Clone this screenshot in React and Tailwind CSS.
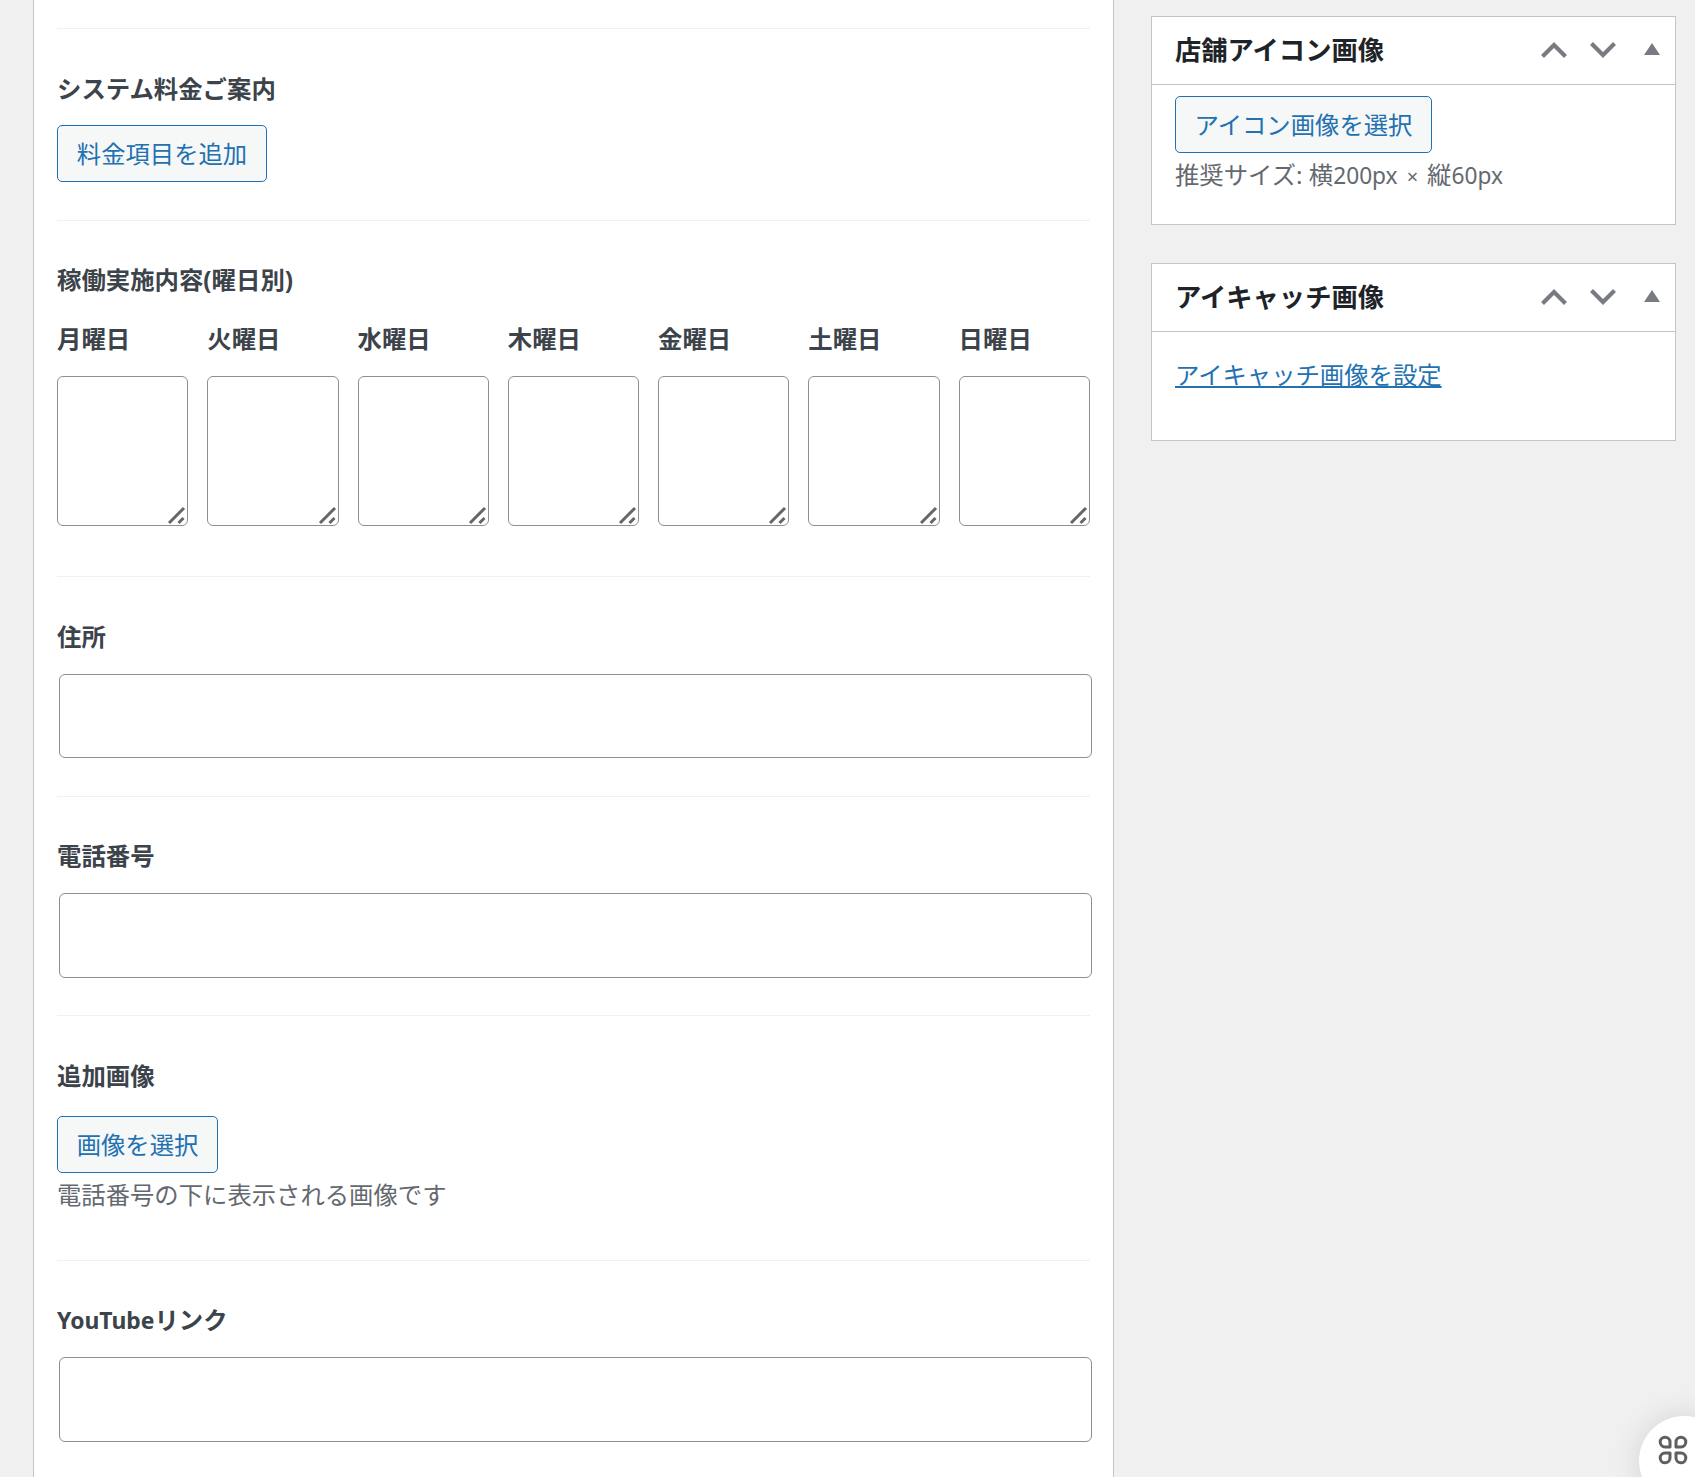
import React from "react";

const FONT = "font-['Noto_Sans','Noto_Sans_CJK_JP',sans-serif]";

function Label({ children }) {
  return <div className="h-[34px] text-[24.4px] font-bold leading-[34px] text-[#3c434a]">{children}</div>;
}

function Btn({ children, w }) {
  return (
    <button className={`flex h-[57px] items-center justify-center rounded-[5px] border border-[#2271b1] bg-[#f6f7f7] pt-[1px] text-[24.35px] leading-none text-[#2271b1] ${w}`}>
      {children}
    </button>
  );
}

function TextInput({ h }) {
  return <input type="text" className={`ml-[2px] block w-[1033px] rounded-[6px] border border-[#8c8f94] bg-white ${h}`} />;
}

function Day({ name }) {
  return (
    <div className="w-[131.4px]">
      <div className="h-[34px] text-[24.4px] font-bold leading-[34px] text-[#3c434a]">{name}</div>
      <div className="relative mt-[20px] h-[150px]">
        <textarea className="block h-full w-full resize-none rounded-[6px] border border-[#8c8f94] bg-white" />
        <svg className="absolute bottom-[1px] right-[1px]" width="20" height="20" viewBox="0 0 20 20" fill="none" stroke="#666666" strokeWidth="3">
          <path d="M2 18 L17 3" />
          <path d="M11.5 18 L16.5 13" />
        </svg>
      </div>
    </div>
  );
}

function Chevron({ up }) {
  return (
    <svg width="28" height="20" viewBox="0 0 28 20" fill="none" stroke="#787c82" strokeWidth="4.2">
      <path d={up ? "M2.5 16.5 L14 5 L25.5 16.5" : "M2.5 3.5 L14 15 L25.5 3.5"} />
    </svg>
  );
}

function WidgetHeader({ title }) {
  return (
    <div className="flex h-[68px] items-center border-b border-[#c3c4c7] pb-[2px] pl-[23px] pr-[15px]">
      <div className="flex-1 pt-[2px] text-[26.3px] font-bold leading-none text-[#1d2327]">{title}</div>
      <div className="flex items-center gap-[21px]">
        <Chevron up />
        <Chevron />
        <svg className="mb-[2px] ml-[6px]" width="16" height="12" viewBox="0 0 16 12" fill="#787c82">
          <path d="M8 0 L16 12 L0 12 Z" />
        </svg>
      </div>
    </div>
  );
}

export default function App() {
  const days = ["月曜日", "火曜日", "水曜日", "木曜日", "金曜日", "土曜日", "日曜日"];
  return (
    <div className={`relative flex h-[1477px] w-[1695px] overflow-hidden bg-[#f0f0f1] pl-[33px] ${FONT}`}>
      <main className="h-full w-[1081px] border-x border-[#c3c4c7] bg-white px-[23px] pt-[28px]">
        <section className="border-t border-[#f0f0f1] pb-[38px] pt-[43px]">
          <Label>システム料金ご案内</Label>
          <div className="mt-[19px]"><Btn w="w-[210px]">料金項目を追加</Btn></div>
        </section>
        <section className="border-t border-[#f0f0f1] pb-[50px] pt-[42px]">
          <Label>稼働実施内容(曜日別)</Label>
          <div className="mt-[25px] flex justify-between">
            {days.map((d) => <Day key={d} name={d} />)}
          </div>
        </section>
        <section className="border-t border-[#f0f0f1] pb-[38px] pt-[43px]">
          <Label>住所</Label>
          <div className="mt-[20px]"><TextInput h="h-[84px]" /></div>
        </section>
        <section className="border-t border-[#f0f0f1] pb-[37px] pt-[42px]">
          <Label>電話番号</Label>
          <div className="mt-[20px]"><TextInput h="h-[85px]" /></div>
        </section>
        <section className="border-t border-[#f0f0f1] pb-[48px] pt-[43px]">
          <Label>追加画像</Label>
          <div className="mt-[23px]"><Btn w="w-[161px]">画像を選択</Btn></div>
          <div className="mt-[5px] h-[34px] text-[24.35px] leading-[34px] text-[#646970]">電話番号の下に表示される画像です</div>
        </section>
        <section className="border-t border-[#f0f0f1] pt-[42px]">
          <Label><span className="text-[22.9px]">YouTube</span>リンク</Label>
          <div className="mt-[20px]"><TextInput h="h-[85px]" /></div>
        </section>
      </main>
      <aside className="ml-[37px] w-[525px] pt-[16px]">
        <div className="h-[209px] border border-[#c3c4c7] bg-white">
          <WidgetHeader title="店舗アイコン画像" />
          <div className="px-[23px] pt-[11px]">
            <Btn w="w-[257px]">アイコン画像を選択</Btn>
            <div className="mt-[5px] h-[34px] whitespace-nowrap text-[24.35px] leading-[34px] text-[#646970]">
              推奨サイズ: 横<span className="text-[22.7px]">200px</span>
              <span className="mx-[9px] text-[20px]">×</span>
              縦<span className="text-[22.7px]">60px</span>
            </div>
          </div>
        </div>
        <div className="mt-[38px] h-[178px] border border-[#c3c4c7] bg-white">
          <WidgetHeader title="アイキャッチ画像" />
          <div className="px-[23px] pt-[26px]">
            <a href="#" className="text-[24.35px] leading-[34px] text-[#2271b1] underline">アイキャッチ画像を設定</a>
          </div>
        </div>
      </aside>
      <div className="absolute left-[1639px] top-[1416px] flex h-[90px] w-[90px] rounded-full bg-white pl-[19px] pt-[19px] shadow-[0_0_30px_rgba(0,0,0,0.12)]">
        <svg width="30" height="30" viewBox="0 0 30 30" fill="none" stroke="#5f5f5f" strokeWidth="3" strokeLinejoin="round">
          <path d="M12 12 H7 A4.9 4.9 0 1 1 12 7 Z" />
          <path d="M18 12 H23 A4.9 4.9 0 1 0 18 7 Z" />
          <path d="M12 18 H7 A4.9 4.9 0 1 0 12 23 Z" />
          <path d="M18 18 H23 A4.9 4.9 0 1 1 18 23 Z" />
        </svg>
      </div>
    </div>
  );
}
